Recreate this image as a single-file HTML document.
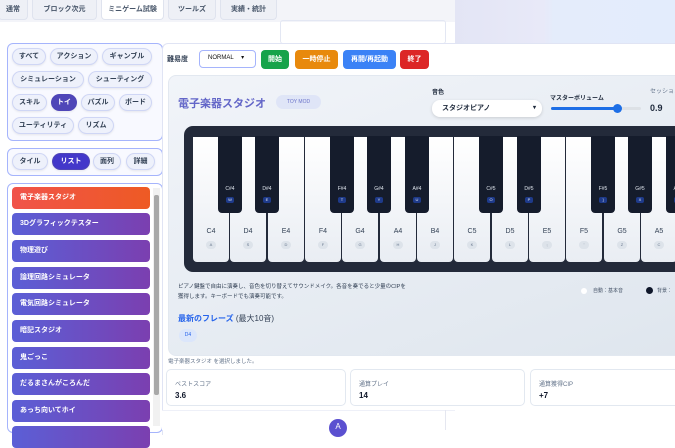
<!DOCTYPE html>
<html><head><meta charset="utf-8"><style>
*{box-sizing:border-box;margin:0;padding:0;white-space:nowrap}
body{width:675px;height:430px;overflow:hidden;position:relative;background:#fff;font-family:"Liberation Sans","Noto Sans CJK JP",sans-serif;color:#1e293b}
.abs{position:absolute}
.tab{position:absolute;top:0;height:20px;border:1px solid #dfe3ee;border-top:none;border-radius:0 0 4px 4px;background:#eef0f6;font-size:7px;font-weight:bold;color:#475569;text-align:center;line-height:20px}
.box{position:absolute;border:1.5px solid #a5b4fc;border-radius:6px;background:#f8f9ff}
.chip{position:absolute;height:17px;border-radius:9px;background:#eef1fb;border:1px solid #cfd6f5;font-size:7px;font-weight:bold;color:#334155;text-align:center;line-height:15px;box-shadow:0 1px 2px rgba(0,0,0,.08)}
.chip.on{background:#4f46b8;color:#fff;border-color:#4f46b8}
.item{position:absolute;left:12px;width:138px;height:22px;border-radius:4px;background:linear-gradient(90deg,#5b5fd6,#7b3fb0);color:#fff;font-size:7px;font-weight:bold;line-height:22px;padding-left:8px}
.btn{position:absolute;top:50px;height:19px;border-radius:4px;color:#fff;font-size:7px;font-weight:bold;text-align:center;line-height:19px}
.wk{position:absolute;top:137px;width:36px;height:125px;background:linear-gradient(#fff,#e9edf3);border-radius:0 0 4px 4px;text-align:center}
.wk b{position:absolute;left:0;right:0;top:91px;font-size:7px;font-weight:normal;color:#334155}
.wk i{position:absolute;left:13px;top:104px;width:10px;height:8px;border-radius:4px;background:#dde3ea;font-size:4px;font-style:normal;color:#64748b;line-height:8px}
.bk{position:absolute;top:136px;width:24px;height:77px;background:#151c2c;border-radius:0 0 4px 4px;text-align:center;color:#e2e8f0}
.bk b{position:absolute;left:0;right:0;top:50px;font-size:5px;font-weight:normal}
.bk i{position:absolute;left:8px;top:61px;width:8px;height:6px;border-radius:2px;background:#1e3a8a;font-size:4px;font-style:normal;line-height:6px}
.card{position:absolute;top:369px;height:37px;border:1px solid #e2e8f0;border-radius:5px;background:#fff}
.card span{position:absolute;left:8px;top:9px;font-size:6px;color:#64748b}
.card b{position:absolute;left:8px;top:21px;font-size:8px;color:#0f172a}
</style></head><body>
<div class="abs" style="left:0;top:0;width:675px;height:22px;background:#f3f4f9"></div>
<div class="abs" style="left:455px;top:0;width:220px;height:430px;background:linear-gradient(90deg,#e3e5f5,#e8e9f8 40%,#e4ecfb 45%,#e3ecfc)"></div>
<div class="abs" style="left:0;top:22px;width:455px;height:408px;background:#fff"></div>
<div class="abs" style="left:280px;top:20px;width:166px;height:24px;border:1px solid #e3e7f3;border-radius:3px"></div>
<div class="tab" style="left:-2px;width:30px">通常</div>
<div class="tab" style="left:32px;width:65px">ブロック次元</div>
<div class="tab" style="left:101px;width:63px;background:#fff">ミニゲーム試験</div>
<div class="tab" style="left:168px;width:48px">ツールズ</div>
<div class="tab" style="left:220px;width:57px">実績・統計</div>

<div class="box" style="left:7px;top:43px;width:156px;height:98px"></div>
<div class="chip" style="left:12px;top:48px;width:34px">すべて</div>
<div class="chip" style="left:50px;top:48px;width:48px">アクション</div>
<div class="chip" style="left:102px;top:48px;width:50px">ギャンブル</div>
<div class="chip" style="left:12px;top:71px;width:72px">シミュレーション</div>
<div class="chip" style="left:88px;top:71px;width:64px">シューティング</div>
<div class="chip" style="left:12px;top:94px;width:35px">スキル</div>
<div class="chip on" style="left:51px;top:94px;width:26px">トイ</div>
<div class="chip" style="left:81px;top:94px;width:34px">パズル</div>
<div class="chip" style="left:119px;top:94px;width:33px">ボード</div>
<div class="chip" style="left:12px;top:117px;width:62px">ユーティリティ</div>
<div class="chip" style="left:78px;top:117px;width:36px">リズム</div>

<div class="box" style="left:7px;top:148px;width:156px;height:28px"></div>
<div class="chip" style="left:12px;top:153px;width:36px">タイル</div>
<div class="chip on" style="left:52px;top:153px;width:38px;background:#4338ca">リスト</div>
<div class="chip" style="left:93px;top:153px;width:28px">面列</div>
<div class="chip" style="left:126px;top:153px;width:29px">詳細</div>

<div class="box" style="left:7px;top:183px;width:156px;height:250px;background:#fff"></div>
<div class="item" style="top:187px;background:linear-gradient(90deg,#f0534a,#ee5a24)">電子楽器スタジオ</div>
<div class="item" style="top:213px">3Dグラフィックテスター</div>
<div class="item" style="top:240px">物理遊び</div>
<div class="item" style="top:267px">論理回路シミュレータ</div>
<div class="item" style="top:293px">電気回路シミュレータ</div>
<div class="item" style="top:320px">暗記スタジオ</div>
<div class="item" style="top:347px">鬼ごっこ</div>
<div class="item" style="top:373px">だるまさんがころんだ</div>
<div class="item" style="top:400px">あっち向いてホイ</div>
<div class="item" style="top:426px"></div>
<div class="abs" style="left:153px;top:188px;width:7px;height:238px;background:#f1f1f1"></div>
<div class="abs" style="left:154px;top:195px;width:5px;height:200px;background:#a8a8a8;border-radius:2px"></div>

<div class="abs" style="left:162px;top:43px;width:513px;height:392px;background:#fff;border-left:1px solid #e0e4f4;border-top:1px solid #e0e4f4;border-radius:6px 0 0 0"></div>
<div class="abs" style="left:167px;top:54px;font-size:7px;font-weight:bold;color:#334155">難易度</div>
<div class="abs" style="left:199px;top:50px;width:57px;height:18px;border:1.5px solid #a5b4fc;border-radius:4px;font-size:6px;line-height:15px;padding-left:8px;color:#111">NORMAL <span style="margin-left:6px">▾</span></div>
<div class="btn" style="left:261px;width:28px;background:#16a34a">開始</div>
<div class="btn" style="left:295px;width:43px;background:#e8890c">一時停止</div>
<div class="btn" style="left:343px;width:53px;background:#3b82f6">再開/再起動</div>
<div class="btn" style="left:400px;width:29px;background:#dc2626">終了</div>

<div class="abs" style="left:168px;top:75px;width:520px;height:281px;background:linear-gradient(160deg,#f1f4f9,#dfe6ee);border:1px solid #e2e8f0;border-radius:8px"></div>
<div class="abs" style="left:178px;top:95px;font-size:11px;font-weight:bold;color:#6366c8">電子楽器スタジオ</div>
<div class="abs" style="left:276px;top:95px;width:45px;height:14px;border-radius:7px;background:#dfe5f7;font-size:5px;color:#6b73c9;text-align:center;line-height:14px">TOY MOD</div>
<div class="abs" style="left:432px;top:87px;font-size:6px;font-weight:bold">音色</div>
<div class="abs" style="left:432px;top:100px;width:110px;height:17px;border-radius:8px;background:#fff;box-shadow:0 1px 3px rgba(0,0,0,.15);font-size:7px;font-weight:bold;line-height:17px;padding-left:10px">スタジオピアノ<span style="position:absolute;right:6px;font-size:6px">▾</span></div>
<div class="abs" style="left:550px;top:93px;font-size:6px;font-weight:bold">マスターボリューム</div>
<div class="abs" style="left:551px;top:107px;width:90px;height:3px;border-radius:2px;background:#dde1e6"></div>
<div class="abs" style="left:551px;top:107px;width:66px;height:3px;border-radius:2px;background:#1d6ee6"></div>
<div class="abs" style="left:613px;top:104px;width:9px;height:9px;border-radius:50%;background:#1d6ee6"></div>
<div class="abs" style="left:650px;top:86px;font-size:6px;color:#64748b">セッション</div>
<div class="abs" style="left:650px;top:103px;font-size:9px;font-weight:bold">0.9</div>

<div class="abs" style="left:184px;top:126px;width:500px;height:146px;background:#232a3a;border-radius:9px"></div>
<div class="wk" style="left:193px"><b>C4</b><i>A</i></div>
<div class="wk" style="left:230px"><b>D4</b><i>S</i></div>
<div class="wk" style="left:268px"><b>E4</b><i>D</i></div>
<div class="wk" style="left:305px"><b>F4</b><i>F</i></div>
<div class="wk" style="left:342px"><b>G4</b><i>G</i></div>
<div class="wk" style="left:380px"><b>A4</b><i>H</i></div>
<div class="wk" style="left:417px"><b>B4</b><i>J</i></div>
<div class="wk" style="left:454px"><b>C5</b><i>K</i></div>
<div class="wk" style="left:492px"><b>D5</b><i>L</i></div>
<div class="wk" style="left:529px"><b>E5</b><i>;</i></div>
<div class="wk" style="left:566px"><b>F5</b><i>'</i></div>
<div class="wk" style="left:604px"><b>G5</b><i>Z</i></div>
<div class="wk" style="left:641px"><b>A5</b><i>C</i></div>
<div class="bk" style="left:218px"><b>C#4</b><i>W</i></div>
<div class="bk" style="left:255px"><b>D#4</b><i>E</i></div>
<div class="bk" style="left:330px"><b>F#4</b><i>T</i></div>
<div class="bk" style="left:367px"><b>G#4</b><i>Y</i></div>
<div class="bk" style="left:405px"><b>A#4</b><i>U</i></div>
<div class="bk" style="left:479px"><b>C#5</b><i>O</i></div>
<div class="bk" style="left:517px"><b>D#5</b><i>P</i></div>
<div class="bk" style="left:591px"><b>F#5</b><i>]</i></div>
<div class="bk" style="left:628px"><b>G#5</b><i>X</i></div>
<div class="bk" style="left:666px"><b>A#5</b><i>V</i></div>

<div class="abs" style="left:178px;top:282px;font-size:5.5px;line-height:10px;color:#334155">ピアノ鍵盤で自由に演奏し、音色を切り替えてサウンドメイク。各音を奏でると少量のCIPを<br>獲得します。キーボードでも演奏可能です。</div>
<div class="abs" style="left:581px;top:288px;width:6px;height:6px;border-radius:50%;background:#fff"></div>
<div class="abs" style="left:593px;top:287px;font-size:5px;color:#475569">自動：基本音</div>
<div class="abs" style="left:646px;top:287px;width:7px;height:7px;border-radius:50%;background:#0f172a"></div>
<div class="abs" style="left:657px;top:287px;font-size:5px;color:#475569">背景：</div>
<div class="abs" style="left:178px;top:313px;font-size:8px;font-weight:bold;color:#2563eb">最新のフレーズ <span style="color:#334155;font-weight:normal">(最大10音)</span></div>
<div class="abs" style="left:179px;top:329px;width:18px;height:13px;border-radius:7px;background:#dbe6fb;font-size:5px;color:#2563eb;text-align:center;line-height:13px">D4</div>
<div class="abs" style="left:168px;top:357px;font-size:5.5px;color:#64748b">電子楽器スタジオ を選択しました。</div>
<div class="card" style="left:166px;width:180px"><span>ベストスコア</span><b>3.6</b></div>
<div class="card" style="left:350px;width:175px"><span>通算プレイ</span><b>14</b></div>
<div class="card" style="left:530px;width:150px"><span>通算獲得CIP</span><b>+7</b></div>
<div class="abs" style="left:162px;top:410px;width:293px;height:20px;background:#fff;border-top:1px solid #eef0f8"></div>
<div class="abs" style="left:445px;top:410px;width:1px;height:20px;background:#e5e7f0"></div>
<div class="abs" style="left:329px;top:419px;width:18px;height:18px;border-radius:50%;background:#5b50d0;color:#fff;font-size:8px;text-align:center;line-height:16px">A</div>
</body></html>
